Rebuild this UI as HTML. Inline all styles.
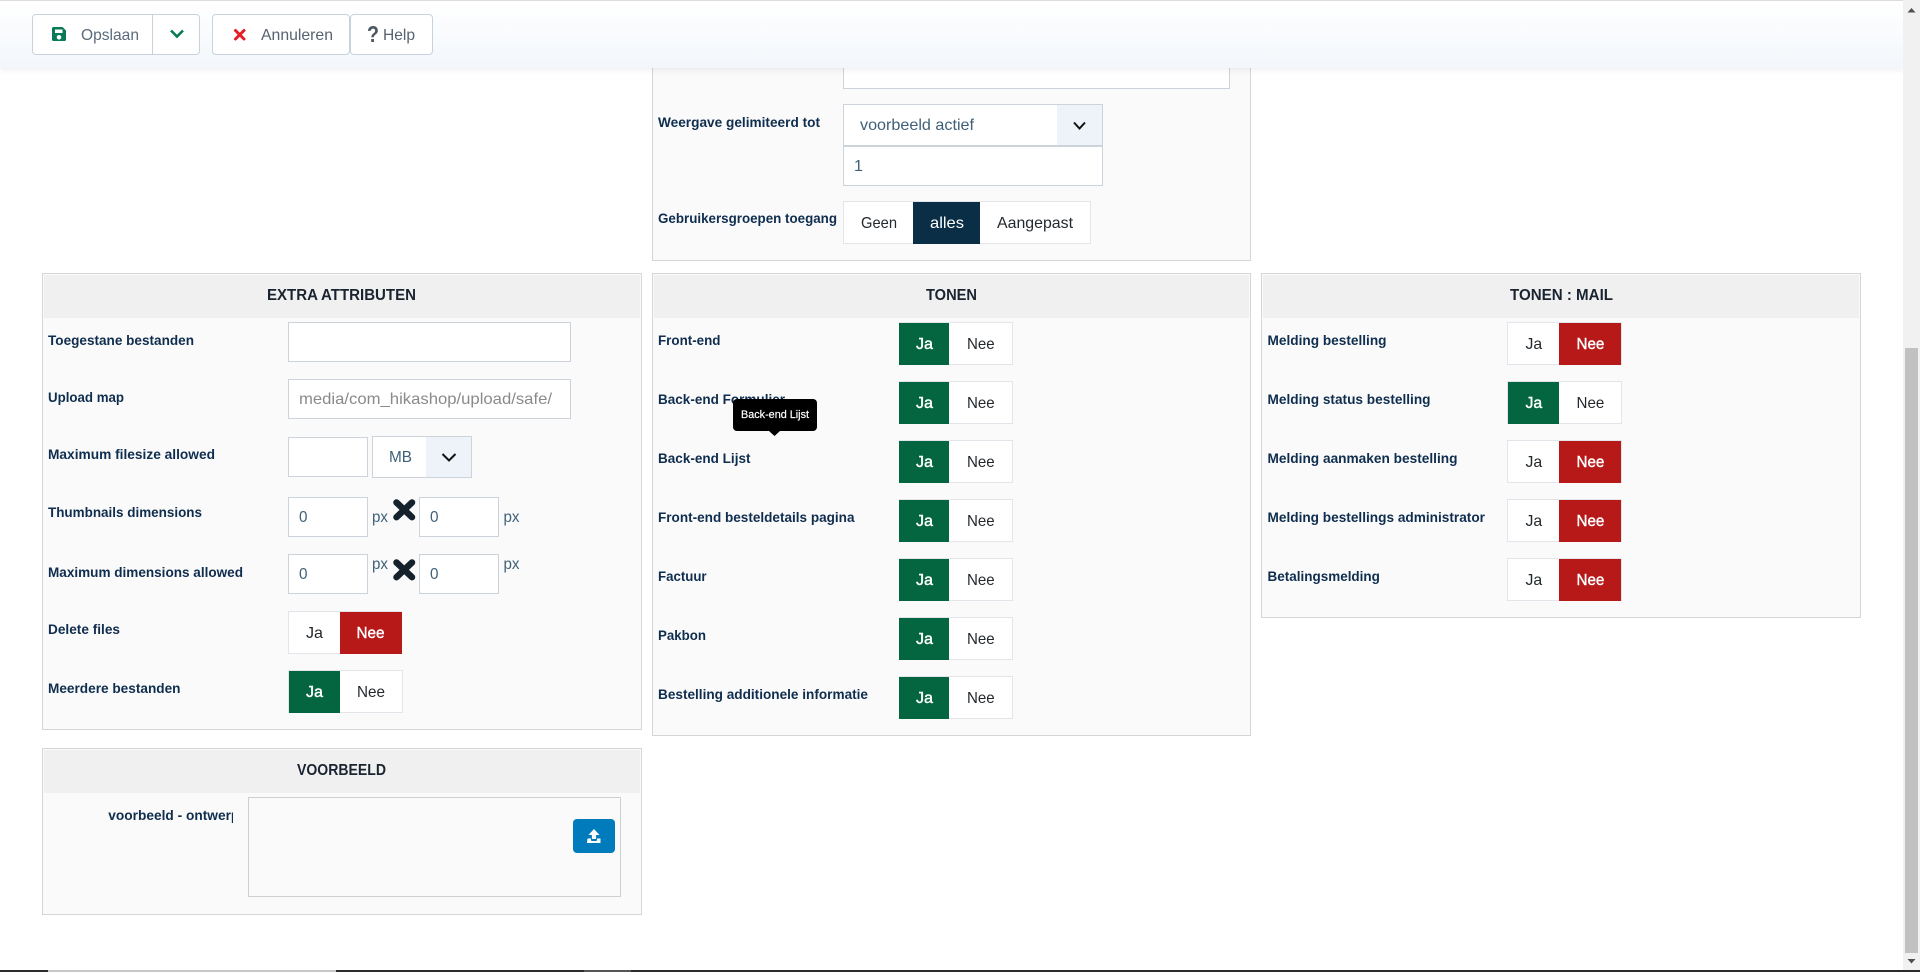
<!DOCTYPE html>
<html lang="nl">
<head>
<meta charset="utf-8">
<title>Opslaan</title>
<style>
html,body{margin:0;padding:0;width:1920px;height:972px;overflow:hidden;background:#fff;font-family:"Liberation Sans",sans-serif}
.b{position:absolute;box-sizing:border-box}
.panel{background:#fafafa;border:1px solid #d6d6d6}
.head{background:#f0f0f0;left:1px;top:1px;right:1px;height:43px}
.in{background:#fff;border:1px solid #cdd3da}
.tg{background:#fff;border:1px solid #e4e5ea;height:43px}
.green{background:#036640}
.red{background:#b71818}
.btn{background:#fff;border:1px solid #c8d2dc;border-radius:4px;height:41px;top:14px}
svg.layer{position:absolute;left:0;top:0;width:1920px;height:972px;z-index:3}
svg text{font-family:"Liberation Sans",sans-serif}
.l{font-size:14px;font-weight:700;fill:#0f2d4e}
.t{font-size:16px;font-weight:700;fill:#1a2430}
.v{font-size:16px;fill:#24292e}
.w{font-size:16px;fill:#fff;stroke:#fff;stroke-width:.4px}
.f{font-size:16px;fill:#3f6078}
.bt{font-size:16px;fill:#56626e}
.p{font-size:16px;fill:#3f6078}
</style>
</head>
<body>

<!-- top panel -->
<div class="b panel" style="left:652px;top:50px;width:599px;height:211px"></div>
<div class="b in" style="left:843px;top:50px;width:387px;height:39px"></div>
<div class="b in" style="left:843px;top:104px;width:260px;height:43px"></div>
<div class="b" style="left:1057px;top:105px;width:45px;height:41px;background:#eef3f9"></div>
<div class="b in" style="left:843px;top:145px;width:260px;height:41px;border-top-width:2px"></div>
<div class="b tg" style="left:843px;top:201px;width:248px"></div>
<div class="b" style="left:913px;top:202px;width:67px;height:42px;background:#092e46"></div>

<!-- extra attributen -->
<div class="b panel" style="left:42px;top:273px;width:600px;height:457px"><div class="b head"></div></div>
<div class="b in" style="left:288px;top:322px;width:283px;height:40px"></div>
<div class="b in" style="left:288px;top:379px;width:283px;height:40px"></div>
<div class="b in" style="left:288px;top:437px;width:80px;height:40px"></div>
<div class="b in" style="left:372px;top:436px;width:100px;height:42px"></div>
<div class="b" style="left:426px;top:437px;width:45px;height:40px;background:#eef3f9"></div>
<div class="b in" style="left:288px;top:497px;width:80px;height:40px"></div>
<div class="b in" style="left:419px;top:497px;width:80px;height:40px"></div>
<div class="b in" style="left:288px;top:554px;width:80px;height:40px"></div>
<div class="b in" style="left:419px;top:554px;width:80px;height:40px"></div>
<div class="b tg" style="left:288px;top:611px;width:114px"></div>
<div class="b red" style="left:340px;top:612px;width:62px;height:42px"></div>
<div class="b tg" style="left:288px;top:670px;width:115px"></div>
<div class="b green" style="left:289px;top:671px;width:51px;height:42px"></div>

<!-- voorbeeld -->
<div class="b panel" style="left:42px;top:748px;width:600px;height:167px"><div class="b head"></div></div>
<div class="b" style="left:248px;top:797px;width:373px;height:100px;border:1px solid #cfcfcf"></div>
<div class="b" style="left:573px;top:819px;width:42px;height:34px;background:#007cbd;border-radius:4px"></div>

<!-- tonen -->
<div class="b panel" style="left:652px;top:273px;width:599px;height:463px"><div class="b head"></div></div>
<div class="b tg" style="left:899px;top:322px;width:114px"></div><div class="b green" style="left:899px;top:323px;width:50px;height:42px"></div>
<div class="b tg" style="left:899px;top:381px;width:114px"></div><div class="b green" style="left:899px;top:382px;width:50px;height:42px"></div>
<div class="b tg" style="left:899px;top:440px;width:114px"></div><div class="b green" style="left:899px;top:441px;width:50px;height:42px"></div>
<div class="b tg" style="left:899px;top:499px;width:114px"></div><div class="b green" style="left:899px;top:500px;width:50px;height:42px"></div>
<div class="b tg" style="left:899px;top:558px;width:114px"></div><div class="b green" style="left:899px;top:559px;width:50px;height:42px"></div>
<div class="b tg" style="left:899px;top:617px;width:114px"></div><div class="b green" style="left:899px;top:618px;width:50px;height:42px"></div>
<div class="b tg" style="left:899px;top:676px;width:114px"></div><div class="b green" style="left:899px;top:677px;width:50px;height:42px"></div>

<!-- tonen mail -->
<div class="b panel" style="left:1261px;top:273px;width:600px;height:345px"><div class="b head"></div></div>
<div class="b tg" style="left:1507px;top:322px;width:115px"></div><div class="b red" style="left:1559px;top:323px;width:62px;height:42px"></div>
<div class="b tg" style="left:1507px;top:381px;width:115px"></div><div class="b green" style="left:1508px;top:382px;width:51px;height:42px"></div>
<div class="b tg" style="left:1507px;top:440px;width:115px"></div><div class="b red" style="left:1559px;top:441px;width:62px;height:42px"></div>
<div class="b tg" style="left:1507px;top:499px;width:115px"></div><div class="b red" style="left:1559px;top:500px;width:62px;height:42px"></div>
<div class="b tg" style="left:1507px;top:558px;width:115px"></div><div class="b red" style="left:1559px;top:559px;width:62px;height:42px"></div>

<!-- toolbar -->
<div class="b" style="left:0;top:0;width:1903px;height:68px;border-top:1px solid #dcdcdc;background:linear-gradient(#fff,#f3f7fb);box-shadow:0 2px 6px rgba(0,0,0,.07);z-index:2">
  <div class="b btn" style="left:32px;top:13px;width:168px"></div>
  <div class="b" style="left:152px;top:13px;width:1px;height:41px;background:#c8d2dc"></div>
  <div class="b btn" style="left:212px;top:13px;width:138px"></div>
  <div class="b btn" style="left:350px;top:13px;width:83px"></div>
</div>

<!-- scrollbar and bottom strip -->
<div class="b" style="left:1903px;top:0;width:17px;height:972px;background:#f1f1f1;z-index:2"></div>
<div class="b" style="left:1905px;top:348px;width:13px;height:605px;background:#c1c1c1;z-index:2"></div>
<div class="b" style="left:0;top:970px;width:1920px;height:2px;background:#2b2b2b;z-index:4"></div>
<div class="b" style="left:48px;top:970px;width:288px;height:2px;background:#c8c8c8;z-index:4"></div>
<div class="b" style="left:584px;top:970px;width:47px;height:2px;background:#555;z-index:4"></div>

<svg class="layer" viewBox="0 0 1920 972" xmlns="http://www.w3.org/2000/svg">
  <defs><clipPath id="lb"><rect x="100" y="800" width="133" height="30"/></clipPath></defs>

  <!-- toolbar -->
  <path d="M53 27h9.500l3.500 3.500V39.500a1.500 1.500 0 0 1-1.500 1.500H53.500A1.500 1.500 0 0 1 52 39.500V28.500A1.500 1.500 0 0 1 53.500 27zM55 29.500v3.500h7.500v-3.500zM59 35a2.300 2.300 0 1 0 0 4.600 2.300 2.300 0 0 0 0-4.600z" fill="#087a55" fill-rule="evenodd"/>
  <text class="bt" x="81" y="40" textLength="58" lengthAdjust="spacingAndGlyphs" style="fill:#5a6b7c">Opslaan</text>
  <polyline points="171,30.500 177,36.500 183,30.500" fill="none" stroke="#087a55" stroke-width="2.600"/>
  <path d="M235.500 30.500l8.500 8.500M244 30.500l-8.500 8.500" stroke="#e61e25" stroke-width="3" stroke-linecap="round" fill="none"/>
  <text class="bt" x="261" y="40" textLength="72" lengthAdjust="spacingAndGlyphs">Annuleren</text>
  <text x="367" y="42" font-size="23" font-weight="700" fill="#4c5660" textLength="12" lengthAdjust="spacingAndGlyphs">?</text>
  <text class="bt" x="383" y="40" textLength="32" lengthAdjust="spacingAndGlyphs">Help</text>

  <!-- top panel -->
  <text class="l" x="658" y="127" textLength="162" lengthAdjust="spacingAndGlyphs">Weergave gelimiteerd tot</text>
  <text class="f" x="860" y="130" textLength="114" lengthAdjust="spacingAndGlyphs">voorbeeld actief</text>
  <polyline points="1074,122.500 1079.500,128.500 1085,122.500" fill="none" stroke="#111" stroke-width="2"/>
  <text class="f" x="854" y="171">1</text>
  <text class="l" x="658" y="223" textLength="179" lengthAdjust="spacingAndGlyphs">Gebruikersgroepen toegang</text>
  <text class="v" x="861" y="228" textLength="36" lengthAdjust="spacingAndGlyphs">Geen</text>
  <text class="v" x="930" y="228" textLength="34" lengthAdjust="spacingAndGlyphs" style="fill:#fff">alles</text>
  <text class="v" x="997" y="228" textLength="76" lengthAdjust="spacingAndGlyphs">Aangepast</text>

  <!-- titles -->
  <text class="t" x="267" y="300" textLength="149" lengthAdjust="spacingAndGlyphs">EXTRA ATTRIBUTEN</text>
  <text class="t" x="926" y="300" textLength="51" lengthAdjust="spacingAndGlyphs">TONEN</text>
  <text class="t" x="1510" y="300" textLength="103" lengthAdjust="spacingAndGlyphs">TONEN : MAIL</text>
  <text class="t" x="297" y="775" textLength="89" lengthAdjust="spacingAndGlyphs">VOORBEELD</text>

  <!-- extra attributen -->
  <text class="l" x="48" y="345" textLength="146" lengthAdjust="spacingAndGlyphs">Toegestane bestanden</text>
  <text class="l" x="48" y="402" textLength="76" lengthAdjust="spacingAndGlyphs">Upload map</text>
  <text x="299" y="404" font-size="16" fill="#8a8a8a" textLength="253" lengthAdjust="spacingAndGlyphs">media/com_hikashop/upload/safe/</text>
  <text class="l" x="48" y="459" textLength="167" lengthAdjust="spacingAndGlyphs">Maximum filesize allowed</text>
  <text class="f" x="389" y="462" textLength="23" lengthAdjust="spacingAndGlyphs">MB</text>
  <polyline points="442.500,454 449,460.500 455.500,454" fill="none" stroke="#111" stroke-width="2"/>
  <text class="l" x="48" y="517" textLength="154" lengthAdjust="spacingAndGlyphs">Thumbnails dimensions</text>
  <text class="f" x="299" y="522" textLength="8.500" lengthAdjust="spacingAndGlyphs">0</text>
  <text class="p" x="372" y="522" textLength="16" lengthAdjust="spacingAndGlyphs">px</text>
  <path d="M396.500 502.500l15.500 14.700M412 502.500l-15.500 14.700" stroke="#16222b" stroke-width="6.500" stroke-linecap="round" fill="none"/>
  <text class="f" x="430" y="522" textLength="8.500" lengthAdjust="spacingAndGlyphs">0</text>
  <text class="p" x="503.500" y="522" textLength="16" lengthAdjust="spacingAndGlyphs">px</text>
  <text class="l" x="48" y="577" textLength="195" lengthAdjust="spacingAndGlyphs">Maximum dimensions allowed</text>
  <text class="f" x="299" y="579" textLength="8.500" lengthAdjust="spacingAndGlyphs">0</text>
  <text class="p" x="372" y="569" textLength="16" lengthAdjust="spacingAndGlyphs">px</text>
  <path d="M396.500 562.500l15.500 14.700M412 562.500l-15.500 14.700" stroke="#16222b" stroke-width="6.500" stroke-linecap="round" fill="none"/>
  <text class="f" x="430" y="579" textLength="8.500" lengthAdjust="spacingAndGlyphs">0</text>
  <text class="p" x="503.500" y="569" textLength="16" lengthAdjust="spacingAndGlyphs">px</text>
  <text class="l" x="48" y="634" textLength="72" lengthAdjust="spacingAndGlyphs">Delete files</text>
  <text class="v" x="306" y="638" textLength="17" lengthAdjust="spacingAndGlyphs">Ja</text>
  <text class="w" x="356.500" y="638" textLength="28" lengthAdjust="spacingAndGlyphs">Nee</text>
  <text class="l" x="48" y="693" textLength="132.500" lengthAdjust="spacingAndGlyphs">Meerdere bestanden</text>
  <text class="w" x="306" y="697" textLength="17" lengthAdjust="spacingAndGlyphs">Ja</text>
  <text class="v" x="357" y="697" textLength="28" lengthAdjust="spacingAndGlyphs">Nee</text>

  <!-- voorbeeld -->
  <g clip-path="url(#lb)"><text class="l" x="108.300" y="820" textLength="131" lengthAdjust="spacingAndGlyphs">voorbeeld - ontwerp</text></g>
  <path d="M594 829l5.500 6h-3.400v4h-4.200v-4h-3.400zM587.500 838.500h3.500v1.500a1 1 0 0 0 1 1h4a1 1 0 0 0 1-1v-1.500h3.500V843h-13.500z" fill="#fff"/>

  <!-- tonen -->
  <text class="l" x="658" y="345" textLength="62.500" lengthAdjust="spacingAndGlyphs">Front-end</text>
  <text class="l" x="658" y="404" textLength="127" lengthAdjust="spacingAndGlyphs">Back-end Formulier</text>
  <text class="l" x="658" y="463" textLength="92.500" lengthAdjust="spacingAndGlyphs">Back-end Lijst</text>
  <text class="l" x="658" y="522" textLength="196.500" lengthAdjust="spacingAndGlyphs">Front-end besteldetails pagina</text>
  <text class="l" x="658" y="581" textLength="48.600" lengthAdjust="spacingAndGlyphs">Factuur</text>
  <text class="l" x="658" y="640" textLength="48" lengthAdjust="spacingAndGlyphs">Pakbon</text>
  <text class="l" x="658" y="699" textLength="210" lengthAdjust="spacingAndGlyphs">Bestelling additionele informatie</text>

  <g>
    <text class="w" x="916" y="349" textLength="17" lengthAdjust="spacingAndGlyphs">Ja</text><text class="v" x="967" y="349" textLength="27.700" lengthAdjust="spacingAndGlyphs">Nee</text>
    <text class="w" x="916" y="408" textLength="17" lengthAdjust="spacingAndGlyphs">Ja</text><text class="v" x="967" y="408" textLength="27.700" lengthAdjust="spacingAndGlyphs">Nee</text>
    <text class="w" x="916" y="467" textLength="17" lengthAdjust="spacingAndGlyphs">Ja</text><text class="v" x="967" y="467" textLength="27.700" lengthAdjust="spacingAndGlyphs">Nee</text>
    <text class="w" x="916" y="526" textLength="17" lengthAdjust="spacingAndGlyphs">Ja</text><text class="v" x="967" y="526" textLength="27.700" lengthAdjust="spacingAndGlyphs">Nee</text>
    <text class="w" x="916" y="585" textLength="17" lengthAdjust="spacingAndGlyphs">Ja</text><text class="v" x="967" y="585" textLength="27.700" lengthAdjust="spacingAndGlyphs">Nee</text>
    <text class="w" x="916" y="644" textLength="17" lengthAdjust="spacingAndGlyphs">Ja</text><text class="v" x="967" y="644" textLength="27.700" lengthAdjust="spacingAndGlyphs">Nee</text>
    <text class="w" x="916" y="703" textLength="17" lengthAdjust="spacingAndGlyphs">Ja</text><text class="v" x="967" y="703" textLength="27.700" lengthAdjust="spacingAndGlyphs">Nee</text>
  </g>

  <!-- tooltip -->
  <rect x="733" y="399" width="84" height="32" rx="4" fill="#000"/>
  <polygon points="769,431 780,431 774.500,436" fill="#000"/>
  <text x="741" y="418" font-size="11" fill="#fff" stroke="#fff" stroke-width=".2" textLength="68" lengthAdjust="spacingAndGlyphs">Back-end Lijst</text>

  <!-- mail -->
  <text class="l" x="1267.500" y="345" textLength="119" lengthAdjust="spacingAndGlyphs">Melding bestelling</text>
  <text class="l" x="1267.500" y="404" textLength="163" lengthAdjust="spacingAndGlyphs">Melding status bestelling</text>
  <text class="l" x="1267.500" y="463" textLength="190" lengthAdjust="spacingAndGlyphs">Melding aanmaken bestelling</text>
  <text class="l" x="1267.500" y="522" textLength="217.500" lengthAdjust="spacingAndGlyphs">Melding bestellings administrator</text>
  <text class="l" x="1267.500" y="581" textLength="112.400" lengthAdjust="spacingAndGlyphs">Betalingsmelding</text>
  <text class="v" x="1525.500" y="349" textLength="16.700" lengthAdjust="spacingAndGlyphs">Ja</text><text class="w" x="1576.500" y="349" textLength="27.800" lengthAdjust="spacingAndGlyphs">Nee</text>
  <text class="w" x="1525.500" y="408" textLength="16.700" lengthAdjust="spacingAndGlyphs">Ja</text><text class="v" x="1576.500" y="408" textLength="27.800" lengthAdjust="spacingAndGlyphs">Nee</text>
  <text class="v" x="1525.500" y="467" textLength="16.700" lengthAdjust="spacingAndGlyphs">Ja</text><text class="w" x="1576.500" y="467" textLength="27.800" lengthAdjust="spacingAndGlyphs">Nee</text>
  <text class="v" x="1525.500" y="526" textLength="16.700" lengthAdjust="spacingAndGlyphs">Ja</text><text class="w" x="1576.500" y="526" textLength="27.800" lengthAdjust="spacingAndGlyphs">Nee</text>
  <text class="v" x="1525.500" y="585" textLength="16.700" lengthAdjust="spacingAndGlyphs">Ja</text><text class="w" x="1576.500" y="585" textLength="27.800" lengthAdjust="spacingAndGlyphs">Nee</text>

  <!-- scrollbar arrows -->
  <polygon points="1911.500,8 1915.500,12.500 1907.500,12.500" fill="#505050"/>
  <polygon points="1907.500,959 1915.500,959 1911.500,963.500" fill="#505050"/>
</svg>
</body>
</html>
